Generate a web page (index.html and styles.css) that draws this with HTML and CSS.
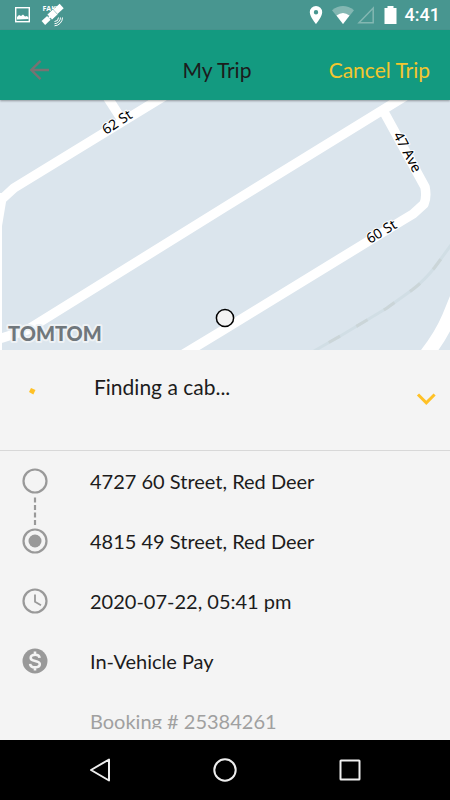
FILE: index.html
```html
<!DOCTYPE html>
<html lang="en">
<head>
<meta charset="utf-8">
<meta name="viewport" content="width=device-width, initial-scale=1">
<title>My Trip</title>
<link rel="stylesheet" href="styles.css">
</head>
<body>
<div class="status-bar">
  <svg class="status-left" width="60" height="30" viewBox="0 0 60 30" aria-hidden="true">
    <rect x="5.700" y="7.700" width="13.600" height="14" fill="none" stroke="#fff" stroke-width="1.400"/>
    <path d="M7 19.500v-2.500l2-2 2 1 2-1.500 2 2 2-.5 1.500 1.500v1.500z" fill="#fff"/>
    <text class="fake-label" x="32.500" y="11">FAKE</text>
    <g fill="#fff" transform="translate(42.500 14.500) rotate(-43)">
      <rect x="-4" y="-3.700" width="8" height="7.400" stroke="#489690" stroke-width=".7"/>
      <rect x="4" y="-3" width="8.500" height="6"/>
      <rect x="-12.500" y="-2.600" width="7.500" height="5.200"/>
      <path d="M-5-1h2v2h-2z"/>
    </g>
    <path d="M48.500 17.500a4 4 0 0 1-4 4M50.500 17.500a6.200 6.200 0 0 1-6 6.200M52.500 17.500a8.300 8.300 0 0 1-8 8.300" fill="none" stroke="#fff" stroke-width="1"/>
  </svg>
  <div class="status-right">
    <svg width="96" height="30" viewBox="0 0 96 30" aria-hidden="true">
      <path fill="#fff" fill-rule="evenodd" d="M15 6a6.200 6.200 0 0 0-6.200 6.200C8.800 16.800 15 24 15 24s6.200-7.200 6.200-11.800A6.200 6.200 0 0 0 15 6zm0 4a2.200 2.200 0 1 1 0 4.400A2.200 2.200 0 0 1 15 10z"/>
      <path fill="#83b7b2" d="M31 10.200Q42 2 53 10.200L42 24z"/>
      <path fill="#fff" d="M35.500 15.500Q42 10.500 48.500 15.500L42 24z"/>
      <path fill="none" stroke="#83b7b2" stroke-width="1.500" d="M72.200 8v14.800H58z"/>
      <path fill="#fff" d="M83.500 8h3V6h6v2h3v16h-12z"/>
    </svg>
    <span class="clock">4:41</span>
  </div>
</div>

<header class="app-bar">
  <button class="back" type="button" aria-label="Back">
    <svg width="24" height="24" viewBox="0 0 24 24"><path d="M23 12H5M14.500 2.800L5.300 12l9.200 9.200" fill="none" stroke="#797272" stroke-width="2.400"/></svg>
  </button>
  <h1>My Trip</h1>
  <button class="cancel" type="button">Cancel Trip</button>
</header>

<main>
  <svg class="map" viewBox="0 0 450 250" preserveAspectRatio="xMidYMid slice" role="img" aria-label="Map">
    <rect width="450" height="250" fill="#dbe5ed"/>
    <path d="M0 93V250H2V126L6 102V93z" fill="#fff"/>
    <g fill="none" stroke="#fff" stroke-width="9.500" stroke-linejoin="round">
      <path d="M166-5L14 88 2 99-3 105"/>
      <path d="M106-5L122 20"/>
      <path d="M407-5L225 107 27 230 2 238-5 240"/>
      <path d="M384 12L425 87Q427 97 424 104L413 114 403 120 225 229 182 255"/>
      <path d="M426 255Q441 236 449 217L458 195" stroke-width="14"/>
    </g>
    <path d="M314 251L342 235 387 208 412 190Q425 180 435 167L451 145" fill="none" stroke="#d1dee5" stroke-width="3"/>
    <path d="M314 251L342 235 387 208 412 190Q425 180 435 167L451 145" fill="none" stroke="#cbd5d8" stroke-width="3" stroke-dasharray="13 19" stroke-dashoffset="-17"/>
    <g class="street">
      <text transform="translate(106 35) rotate(-33)">62 St</text>
      <text transform="translate(370 144) rotate(-31)">60 St</text>
      <text transform="translate(393 35) rotate(62)">47 Ave</text>
    </g>
    <circle cx="225" cy="218" r="8.600" fill="#f3f3f3" stroke="#000" stroke-width="1.500"/>
    <text class="map-brand" x="8" y="241">TOMTOM</text>
  </svg>

  <section class="finding">
    <svg class="spinner" width="24" height="24" viewBox="0 0 24 24" aria-hidden="true"><path d="M9 10l4.500 2-2.200 4.500-4.300-2.400z" fill="#ffc126"/></svg>
    <p>Finding a cab...</p>
    <button class="expand" type="button" aria-label="Show details">
      <svg width="24" height="24" viewBox="0 0 24 24"><path d="M4 8.500l8.300 8.300 8.300-8.300" fill="none" stroke="#ffc126" stroke-width="3"/></svg>
    </button>
  </section>

  <ul class="details">
    <li>
      <svg class="icon" viewBox="0 0 26 60" aria-hidden="true"><circle cx="13" cy="30" r="11.500"/><path d="M13 46.500V61" stroke-dasharray="5 2.500"/></svg>
      <span>4727 60 Street, Red Deer</span>
    </li>
    <li>
      <svg class="icon" viewBox="0 0 26 60" aria-hidden="true"><path d="M13 1.500v5M13 9v5"/><circle cx="13" cy="30" r="11.500"/><circle class="solid" cx="13" cy="30" r="6.500"/></svg>
      <span>4815 49 Street, Red Deer</span>
    </li>
    <li>
      <svg class="icon" viewBox="0 0 26 60" aria-hidden="true"><circle cx="13" cy="30" r="11.500"/><path d="M13 23.500v7.200l6 3.500" stroke-width="1.800"/></svg>
      <span>2020-07-22, 05:41 pm</span>
    </li>
    <li>
      <svg class="icon" viewBox="0 0 26 60" aria-hidden="true"><circle class="solid" cx="13" cy="30" r="12.500"/><path class="dollar" d="M13 20.500v3.500M13 36v3.500M17.600 26.800C17.400 24.800 15.600 23.700 13.200 23.700 10.500 23.700 8.700 25 8.700 26.900 8.700 31.200 17.800 28.600 17.800 33.100 17.800 35.200 15.800 36.400 13.100 36.400 10.300 36.400 8.300 35.100 8.100 32.900"/></svg>
      <span>In-Vehicle Pay</span>
    </li>
    <li class="booking"><span>Booking # 25384261</span></li>
  </ul>
</main>

<nav class="system-nav" aria-label="System">
  <button type="button" aria-label="Back"><svg width="26" height="26" viewBox="0 0 26 26"><path d="M22 2.500v21L4 13z"/></svg></button>
  <button type="button" aria-label="Home"><svg width="26" height="26" viewBox="0 0 26 26"><circle cx="13" cy="13" r="10.700"/></svg></button>
  <button type="button" aria-label="Recent apps"><svg width="26" height="26" viewBox="0 0 26 26"><rect x="3.500" y="3.500" width="19" height="19" rx=".5"/></svg></button>
</nav>
</body>
</html>
```
FILE: styles.css
```css
* {
  box-sizing: border-box;
}

body {
  margin: 0;
  height: 100vh;
  display: flex;
  flex-direction: column;
  background: #f4f4f4;
  color: #1c1c1c;
  font: 400 21px/24px Lato, "Open Sans", sans-serif;
}

button {
  padding: 0;
  border: 0;
  background: none;
  font: inherit;
  color: inherit;
  cursor: pointer;
}

svg {
  display: block;
}

.status-bar {
  flex: none;
  display: flex;
  justify-content: space-between;
  padding: 0 10px;
  height: 30px;
  background: #489690;
}

.fake-label {
  font: bold 7px "Open Sans", sans-serif;
  fill: #fff;
}

.status-right {
  display: flex;
  align-items: center;
  gap: 8px;
}

.clock {
  font: 500 18px/30px Roboto, sans-serif;
  color: #fff;
}

.app-bar {
  position: relative;
  z-index: 1;
  flex: none;
  display: grid;
  grid-template-columns: 1fr auto 1fr;
  align-items: center;
  height: 70px;
  padding: 10px 20px 0 4px;
  background: #139a80;
  box-shadow: 0 1px 2px rgba(0, 0, 0, 0.35);
}

.app-bar h1 {
  margin: 0;
  font-size: 21px;
  font-weight: 400;
}

.back {
  justify-self: start;
  margin-left: 22px;
}

.cancel {
  justify-self: end;
  color: #f3c62f;
}

main {
  flex: 1;
  min-height: 0;
  display: flex;
  flex-direction: column;
}

.map {
  flex: none;
  width: 100%;
  height: 250px;
}

.street {
  font: 400 14px "Noto Sans", sans-serif;
  fill: #000;
  stroke: #fff;
  stroke-width: 2px;
  paint-order: stroke;
}

.map-brand {
  font: 900 20px Lato, sans-serif;
  fill: #70777c;
  stroke: #eef2f5;
  stroke-width: 4px;
  stroke-linejoin: round;
  paint-order: stroke;
}

.finding {
  flex: none;
  display: flex;
  align-items: flex-start;
  height: 101px;
  padding: 25px 12px 0 22px;
  border-bottom: 1px solid #d8d8d8;
}

.finding p {
  flex: 1;
  margin: 0 0 0 48px;
}

.spinner {
  margin-top: 3px;
}

.expand {
  margin-top: 11px;
}

.details {
  flex: 1;
  min-height: 0;
  margin: 0 0 11px;
  padding: 0;
  overflow: hidden;
  list-style: none;
  font-size: 20px;
}

.details li {
  display: flex;
  align-items: center;
  gap: 42px;
  height: 60px;
  padding: 0 22px;
}

.details .booking {
  padding-left: 90px;
  color: #a0a0a0;
}

.icon {
  width: 26px;
  height: 60px;
  fill: none;
  stroke: #999;
  stroke-width: 2.2px;
}

.icon .solid {
  fill: #999;
  stroke: none;
}

.icon .dollar {
  stroke: #f4f4f4;
  stroke-width: 2.6px;
}

.system-nav {
  flex: none;
  display: flex;
  justify-content: center;
  gap: 99px;
  height: 60px;
  background: #000;
}

.system-nav svg {
  fill: none;
  stroke: #eee;
  stroke-width: 2px;
  stroke-linejoin: round;
}
```
